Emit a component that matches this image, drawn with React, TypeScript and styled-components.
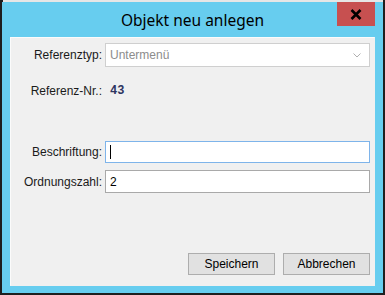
import React from 'react';
import styled, { createGlobalStyle } from 'styled-components';

const GlobalStyle = createGlobalStyle`
  html, body {
    margin: 0;
    padding: 0;
    background: #1e1e1e;
  }
  * {
    box-sizing: border-box;
  }
`;

const Page = styled.div`
  width: 385px;
  height: 295px;
  display: flex;
  flex-direction: column;
  padding: 0 2px 2px 2px;
  background: #1e1e1e;
  font-family: 'Liberation Sans', Arial, sans-serif;
  overflow: hidden;
`;

const BehindStrip = styled.div`
  height: 2px;
  margin-left: 1px;
  background: #e6e6e6;
`;

const Window = styled.div`
  flex: 1;
  display: flex;
  flex-direction: column;
  background: #67cdef;
  padding: 0 8px 7px 8px;
`;

const TitleBar = styled.div`
  height: 35px;
  display: grid;
  grid-template-columns: 38px 1fr 38px;
  align-items: start;
`;

const Title = styled.div`
  grid-column: 2;
  align-self: center;
  text-align: center;
  font-family: 'Noto Sans', 'Open Sans', sans-serif;
  font-size: 15.5px;
  color: #000;
  padding-top: 1px;
`;

const CloseButton = styled.button`
  grid-column: 3;
  width: 38px;
  height: 24px;
  border: none;
  padding: 0;
  background: #c75050;
  display: flex;
  align-items: center;
  justify-content: center;
`;

const Panel = styled.div`
  flex: 1;
  display: flex;
  flex-direction: column;
  background: #f0f0f0;
  border: 1px solid #fbfbfb;
  border-right-color: #f0f0f0;
  border-bottom-color: #f0f0f0;
  padding: 5px 4px 10px 0;
`;

const Row = styled.div<{ $top?: number; $height: number }>`
  display: flex;
  align-items: center;
  margin-top: ${({ $top }) => $top ?? 0}px;
  height: ${({ $height }) => $height}px;
`;

const Label = styled.div`
  width: 91px;
  text-align: right;
  font-size: 12px;
  color: #1a1a1a;
  flex-shrink: 0;
`;

const FieldCell = styled.div`
  flex: 1;
  margin-left: 3px;
  height: 100%;
  display: flex;
  align-items: center;
`;

const Select = styled.div`
  flex: 1;
  height: 100%;
  display: flex;
  align-items: center;
  justify-content: space-between;
  background: #fff;
  border: 1px solid #cfcfcf;
  padding: 0 8px 0 4px;
  font-size: 12px;
  color: #8c8c8c;
`;

const Value = styled.span`
  padding-left: 5px;
  font-family: 'Liberation Mono', 'Courier New', monospace;
  font-size: 12px;
  font-weight: bold;
  color: #2e3560;
`;

const TextBox = styled.div<{ $focused?: boolean }>`
  flex: 1;
  height: 100%;
  display: flex;
  align-items: center;
  background: #fff;
  border: 1px solid ${({ $focused }) => ($focused ? '#7eb4ea' : '#a9a9a9')};
  padding: 0 4px;
  font-size: 12px;
  color: #000;
`;

const Caret = styled.span`
  display: inline-block;
  width: 1px;
  height: 14px;
  background: #000;
`;

const ButtonRow = styled.div`
  margin-top: auto;
  display: flex;
  justify-content: flex-end;
  gap: 8px;
`;

const Button = styled.button`
  width: 87px;
  height: 22px;
  background: #e1e1e1;
  border: 1px solid #adadad;
  font-family: 'Liberation Sans', Arial, sans-serif;
  font-size: 12px;
  color: #000;
  padding: 0;
`;

const App = () => {
  return (
    <>
      <GlobalStyle />
      <Page>
        <BehindStrip />
        <Window>
          <TitleBar>
            <Title>Objekt neu anlegen</Title>
            <CloseButton aria-label="Schließen">
              <svg width="12" height="11" viewBox="0 0 12 11">
                <path d="M1.5 1 L10.5 10 M10.5 1 L1.5 10" stroke="#000" strokeWidth="2.6" />
              </svg>
            </CloseButton>
          </TitleBar>
          <Panel>
            <Row $height={24}>
              <Label>Referenztyp:</Label>
              <FieldCell>
                <Select>
                  <span>Untermenü</span>
                  <svg width="8" height="5" viewBox="0 0 8 5">
                    <path d="M0.5 0.5 L4 4 L7.5 0.5" fill="none" stroke="#b0b0b0" strokeWidth="1" />
                  </svg>
                </Select>
              </FieldCell>
            </Row>
            <Row $top={14} $height={20}>
              <Label>Referenz-Nr.:</Label>
              <FieldCell>
                <Value>43</Value>
              </FieldCell>
            </Row>
            <Row $top={40} $height={22}>
              <Label>Beschriftung:</Label>
              <FieldCell>
                <TextBox $focused>
                  <Caret />
                </TextBox>
              </FieldCell>
            </Row>
            <Row $top={7} $height={23}>
              <Label>Ordnungszahl:</Label>
              <FieldCell>
                <TextBox>2</TextBox>
              </FieldCell>
            </Row>
            <ButtonRow>
              <Button>Speichern</Button>
              <Button>Abbrechen</Button>
            </ButtonRow>
          </Panel>
        </Window>
      </Page>
    </>
  );
};

export default App;
